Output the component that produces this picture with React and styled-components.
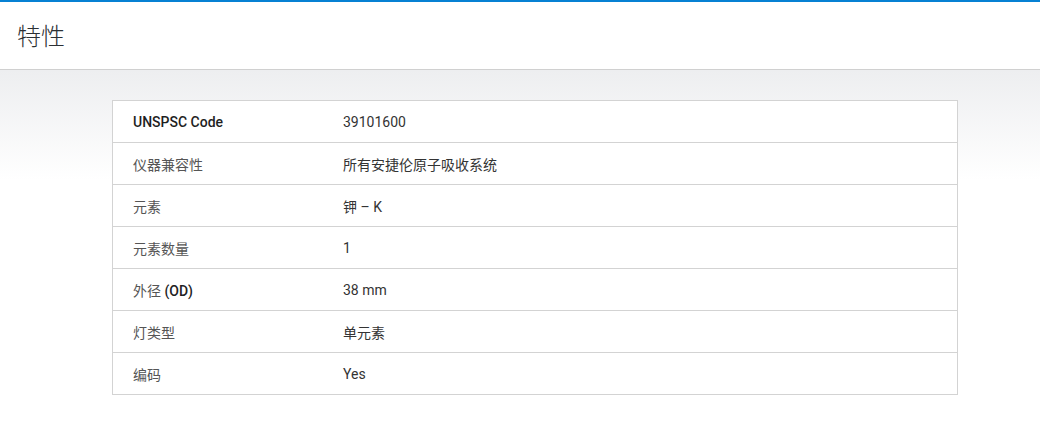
import React from "react";
import styled, { createGlobalStyle } from "styled-components";

const GlobalStyle = createGlobalStyle`
  html, body {
    margin: 0;
    padding: 0;
    background: #fff;
  }
  body {
    font-family: Roboto, "Noto Sans CJK SC", sans-serif;
    color: #333;
  }
`;

const rows = [
  { label: "UNSPSC Code", value: "39101600", bold: true },
  { label: "仪器兼容性", value: "所有安捷伦原子吸收系统" },
  { label: "元素", value: "钾 – K" },
  { label: "元素数量", value: "1" },
  { label: "外径 (OD)", value: "38 mm" },
  { label: "灯类型", value: "单元素" },
  { label: "编码", value: "Yes" },
];

function App() {
  return (
    <>
      <GlobalStyle />
      <Header>
        <Title>特性</Title>
      </Header>
      <Body>
        <Table>
          <tbody>
            {rows.map((r) => (
              <Row key={r.label}>
                <Label bold={r.bold ? 1 : 0}>
                  {r.label === "外径 (OD)" ? (
                    <>
                      外径 <Strong>(OD)</Strong>
                    </>
                  ) : (
                    r.label
                  )}
                </Label>
                <Value>{r.value}</Value>
              </Row>
            ))}
          </tbody>
        </Table>
      </Body>
    </>
  );
}

const Header = styled.header`
  border-top: 2px solid #0681d3;
  border-bottom: 1px solid #d0d0d0;
  height: 67px;
  display: flex;
  align-items: center;
  padding-left: 17px;
  background: #fff;
`;

const Title = styled.h1`
  margin: 0;
  font-size: 24px;
  font-weight: 300;
  color: #2c3034;
  position: relative;
  top: -1px;
`;

const Body = styled.main`
  background: linear-gradient(to bottom, #edeef0 0px, #ffffff 110px);
  padding: 30px 82px 40px 112px;
`;

const Table = styled.table`
  width: 846px;
  border-collapse: collapse;
  background: #fff;
  border: 1px solid #d3d3d3;
`;

const Row = styled.tr`
  height: 42px;
  border-top: 1px solid #d3d3d3;
  &:first-child {
    border-top: none;
  }
`;

const Label = styled.td`
  width: 189px;
  padding: 0 0 0 20px;
  font-size: 14px;
  color: ${(p) => (p.bold ? "#1f1f1f" : "#555")};
  font-weight: ${(p) => (p.bold ? 500 : 400)};
  vertical-align: middle;
`;

const Strong = styled.span`
  font-weight: 500;
  color: #222;
`;

const Value = styled.td`
  padding: 0 0 0 21px;
  font-size: 14px;
  color: #333;
  vertical-align: middle;
`;

export default App;
